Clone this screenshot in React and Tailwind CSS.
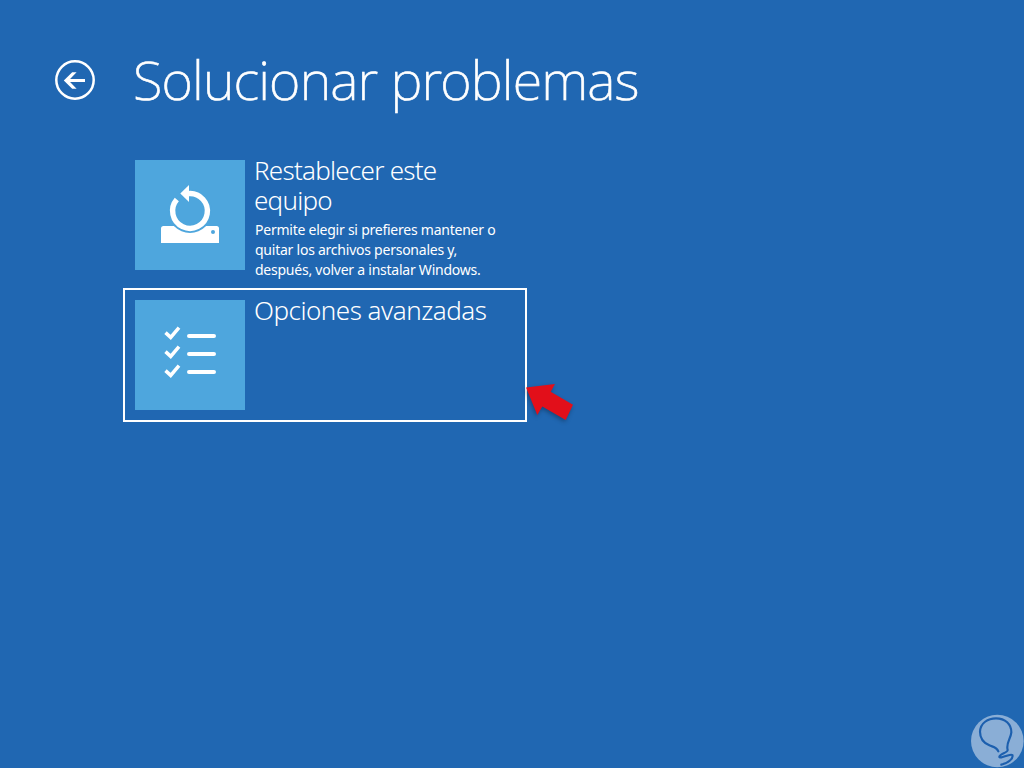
const BackButton = () => (
  <button type="button" aria-label="Atrás" className="block h-10 w-10 shrink-0">
    <svg width="40" height="40" viewBox="0 0 40 40" fill="none" stroke="#fff">
      <circle cx="20" cy="20" r="18.7" strokeWidth="2.5" />
      <path d="M11 20.5H30" strokeWidth="3" />
      <path d="M17.2 12.3H21.6L13.6 20.5L21.6 28.7H17.2L8.8 20.5Z" fill="#fff" stroke="none" />
    </svg>
  </button>
)

const ResetIcon = () => (
  <svg width="110" height="110" viewBox="0 0 110 110" fill="none">
    <path d="M26 83V68.5Q26 66 28.5 66H81.5Q84 66 84 68.5V83Z" fill="#fff" />
    <circle cx="55" cy="51" r="22" fill="#4ea6dd" />
    <path d="M41.8 39.6A17.4 17.4 0 1 0 53.5 33.6" stroke="#fff" strokeWidth="5.4" />
    <path d="M45.3 33.5L54 25V42Z" fill="#fff" />
    <circle cx="78" cy="72" r="2" fill="#4ea6dd" />
  </svg>
)

const ChecklistIcon = () => (
  <svg width="110" height="110" viewBox="0 0 110 110" fill="none" stroke="#fff">
    <path d="M30.5 32.6L35.7 37.4L44 27.6M30.5 51.6L35.7 56.4L44 46.6M30.5 70.6L35.7 75.4L44 65.6" strokeWidth="3.5" />
    <path d="M54 36H79M54 54H79M54 72H79" strokeWidth="4" strokeLinecap="round" />
  </svg>
)

const Option = ({ icon, title, selected, children }) => (
  <button
    type="button"
    className={
      selected
        ? "flex h-[134px] w-[404px] items-start border-2 border-white p-[10px] text-left tracking-[-0.5px]"
        : "flex h-[134px] w-[404px] items-start p-3 text-left tracking-[-0.75px]"
    }
  >
    <span className="block h-[110px] w-[110px] shrink-0 bg-[#4ea6dd]">{icon}</span>
    <span className="block pl-[9px] whitespace-nowrap">
      <span className="-mt-[5px] block text-[26px] leading-[30px] font-light">{title}</span>
      {children && (
        <span className="mt-[5px] block pl-px text-[14px] leading-5 tracking-[-0.24px]">{children}</span>
      )}
    </span>
  </button>
)

const Pointer = () => (
  <svg
    className="absolute top-[380px] left-[520px] drop-shadow-[-1px_2px_2px_rgba(0,0,0,0.3)]"
    width="60"
    height="48"
    viewBox="0 0 60 48"
  >
    <path d="M6 7.6L35 4L30.7 11.7L53 24.7L45.7 40L22.3 26.5L17.3 35Z" fill="#e20f1a" />
  </svg>
)

const Watermark = () => (
  <svg className="absolute right-0 bottom-0" width="64" height="64" viewBox="0 0 192 192" fill="none">
    <circle cx="112" cy="111" r="79" fill="#8aaed6" />
    <path
      d="M115 142C109 128 99 129 88 124C70 116 60 100 60 83C61 57 84 43 108 43C136 43 154 61 154 85C152 106 137 117 143 138C144 146 118 150 118 159C120 166 150 147 157 153C161 163 145 177 124 182"
      stroke="#1c5fae"
      strokeWidth="6.5"
      strokeLinecap="round"
    />
  </svg>
)

const App = () => {
  return (
    <div className="relative h-[768px] w-[1024px] overflow-hidden bg-[#2067b2] font-['Noto_Sans','Open_Sans',sans-serif] text-white">
      <header className="flex h-[148px] items-start pt-[60px] pl-[55px]">
        <BackButton />
        <h1 className="-mt-[19px] ml-[38px] text-[54px] leading-[76px] font-extralight tracking-[-0.85px] whitespace-nowrap [-webkit-text-stroke:0.6px_#fff]">
          Solucionar problemas
        </h1>
      </header>
      <main className="flex flex-col gap-[6px] pl-[123px]">
        <Option icon={<ResetIcon />} title={<>Restablecer este<br />equipo</>}>
          Permite elegir si prefieres mantener o<br />
          quitar los archivos personales y,<br />
          después, volver a instalar Windows.
        </Option>
        <Option icon={<ChecklistIcon />} title="Opciones avanzadas" selected />
      </main>
      <Pointer />
      <Watermark />
    </div>
  )
}

export default App
